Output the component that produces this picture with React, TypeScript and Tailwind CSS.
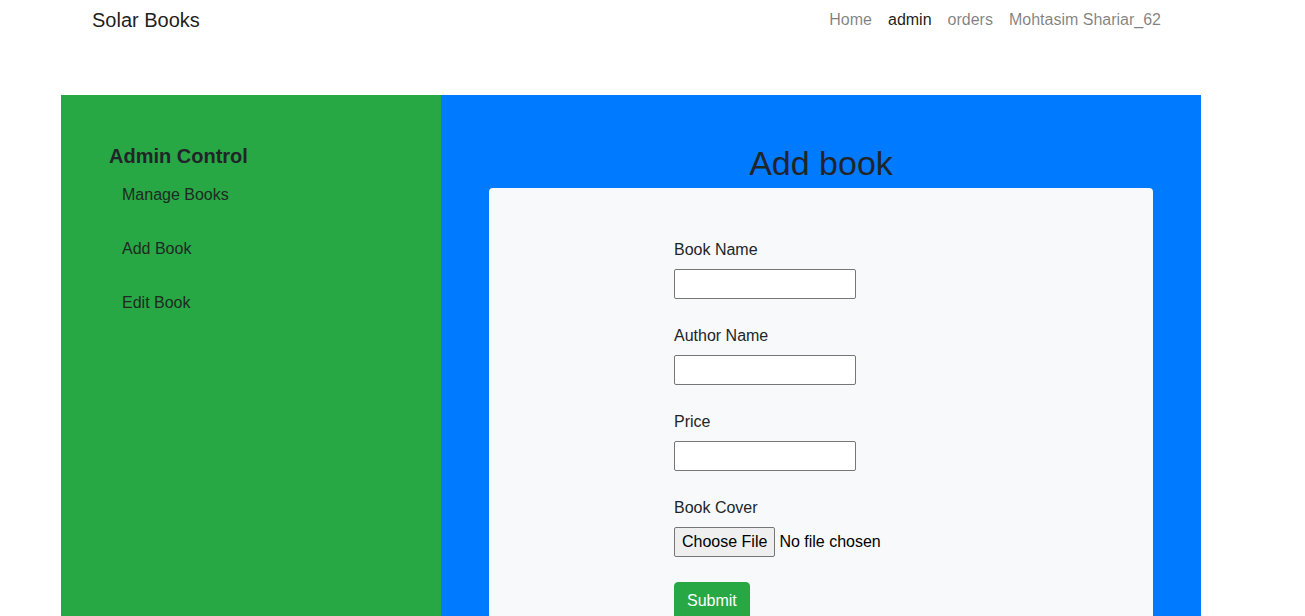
export default function App() {
  const fields = ["Book Name", "Author Name", "Price"];

  return (
    <div className="min-h-screen bg-white text-[#212529] font-['Segoe_UI','Liberation_Sans',Arial,sans-serif]">
      <nav className="flex items-center h-[40px] pl-[92px] pr-[144px]">
        <span className="text-[20px] leading-[30px] text-[rgba(0,0,0,0.9)]">Solar Books</span>
        <div className="ml-auto flex gap-4 text-[16px] leading-[24px]">
          <span className="text-[rgba(0,0,0,0.5)]">Home</span>
          <span className="text-[rgba(0,0,0,0.9)]">admin</span>
          <span className="text-[rgba(0,0,0,0.5)]">orders</span>
          <span className="text-[rgba(0,0,0,0.5)]">Mohtasim Shariar_62</span>
        </div>
      </nav>

      <div className="ml-[61px] mt-[55px] w-[1140px] flex">
        <aside className="w-[380px] bg-[#28a745] pl-[48px] pt-[49px]">
          <h5 className="text-[20px] leading-[24px] font-semibold text-[#212529]">Admin Control</h5>
          <ul className="pl-[13px] text-[16px] leading-[24px] text-[#1e2a22]">
            <li className="py-[15px]">Manage Books</li>
            <li className="py-[15px]">Add Book</li>
            <li className="py-[15px]">Edit Book</li>
          </ul>
        </aside>

        <main className="w-[760px] bg-[#007bff] px-[48px] pt-[49px] pb-[48px]">
          <h2 className="text-center text-[34px] leading-[38px] font-medium text-[#212529] mb-[6px]">Add book</h2>
          <div className="bg-[#f8f9fa] rounded-[4px] pl-[185px] pt-[50px] pb-[48px]">
            <form className="flex flex-col text-[16px] leading-[24px]">
              {fields.map((f) => (
                <div key={f} className="mb-[25px]">
                  <label className="block mb-[7px]">{f}</label>
                  <input
                    type="text"
                    className="block w-[182px] h-[30px] bg-white border border-[#767676] rounded-[2px]"
                  />
                </div>
              ))}
              <div className="mb-[25px]">
                <label className="block mb-[7px]">Book Cover</label>
                <div className="flex items-center gap-[4px]">
                  <button
                    type="button"
                    className="h-[30px] px-[7px] bg-[#efefef] border border-[#767676] rounded-[2px] text-[16px] leading-[24px] text-black"
                  >
                    Choose File
                  </button>
                  <span className="text-black">No file chosen</span>
                </div>
              </div>
              <div>
                <button
                  type="button"
                  className="px-[12px] py-[6px] bg-[#28a745] text-white rounded-[4px] border border-[#28a745] leading-[24px]"
                >
                  Submit
                </button>
              </div>
            </form>
          </div>
        </main>
      </div>
    </div>
  );
}
